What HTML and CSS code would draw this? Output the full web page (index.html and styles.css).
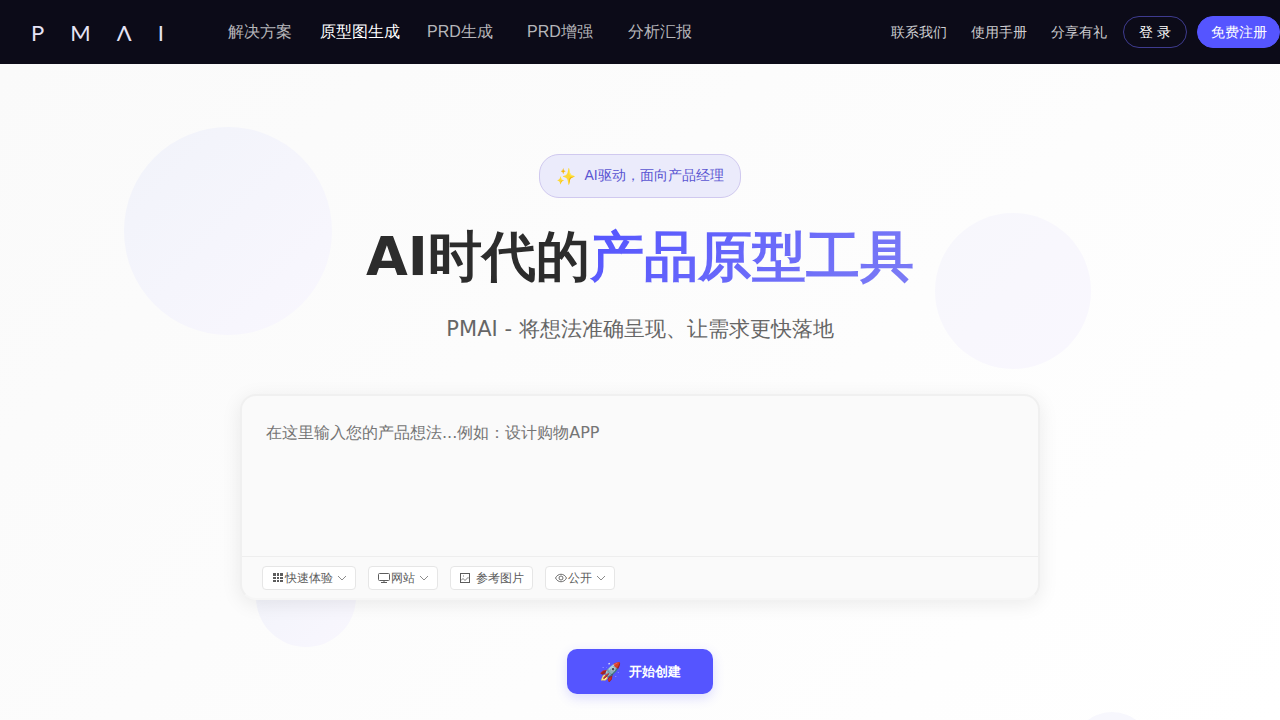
FILE: index.html
```html
<!DOCTYPE html>
<html lang="en">
<head>
    <meta charset="UTF-8">
    <meta name="viewport" content="width=device-width, initial-scale=1.0">
    <title>PMAI</title>
    <link rel="stylesheet" href="styles.css">
</head>
<body>
    <header class="header">
        <a href="#" class="logo"><span>P</span><span>M</span><span>Λ</span><span>I</span></a>
        <nav class="nav">
            <a href="#">解决方案</a>
            <a href="#" class="active">原型图生成</a>
            <a href="#">PRD生成</a>
            <a href="#">PRD增强</a>
            <a href="#">分析汇报</a>
        </nav>
        <div class="header-links">
            <a href="#">联系我们</a>
            <a href="#">使用手册</a>
            <a href="#">分享有礼</a>
        </div>
        <div class="header-buttons">
            <button type="button" class="btn-login">登 录</button>
            <button type="button" class="btn-register">免费注册</button>
        </div>
    </header>

    <main class="hero">
        <div class="circle circle-1"></div>
        <div class="circle circle-2"></div>
        <div class="circle circle-3"></div>
        <div class="circle circle-4"></div>

        <div class="badge"><span class="badge-icon">✨</span><span>AI驱动，面向产品经理</span></div>
        <h1 class="title">AI时代的<span class="highlight">产品原型工具</span></h1>
        <p class="subtitle">PMAI - 将想法准确呈现、让需求更快落地</p>

        <form class="prompt">
            <textarea class="prompt-input" aria-label="产品想法" placeholder="在这里输入您的产品想法...例如：设计购物APP"></textarea>
            <div class="toolbar">
                <button type="button" class="chip">
                    <svg width="12" height="12" viewBox="0 0 12 12" fill="currentColor">
                        <path d="M1 1h3v3H1zM5 1h2v3H5zM8 1h3v3H8zM1 5h3v2H1zM5 5h2v2H5zM8 5h3v2H8zM1 8h3v2H1zM5 8h2v2H5zM8 8h3v2H8z"/>
                    </svg>
                    <span>快速体验</span>
                    <svg class="arrow" width="10" height="10" viewBox="0 0 10 10"><path d="M1 3l4 4 4-4"/></svg>
                </button>
                <button type="button" class="chip">
                    <svg width="12" height="12" viewBox="0 0 12 12" fill="none" stroke="currentColor">
                        <rect x="0.5" y="1.5" width="11" height="7" rx="1"/>
                        <path d="M6 8.500v2M3 10.500h6"/>
                    </svg>
                    <span>网站</span>
                    <svg class="arrow" width="10" height="10" viewBox="0 0 10 10"><path d="M1 3l4 4 4-4"/></svg>
                </button>
                <button type="button" class="chip chip-upload">
                    <svg width="10" height="10" viewBox="0 0 10 10" fill="none" stroke="currentColor">
                        <rect x="0.5" y="0.5" width="9" height="9"/>
                        <path d="M1 7.500l2-2 2 2 3-3 1 1M3 3h1" stroke-width="0.8"/>
                    </svg>
                    <span>参考图片</span>
                </button>
                <button type="button" class="chip">
                    <svg width="12" height="12" viewBox="0 0 12 12" fill="none" stroke="currentColor" stroke-width="0.9">
                        <path d="M0.500 6C3 1 9 1 11.500 6C9 11 3 11 0.500 6z"/>
                        <circle cx="6" cy="6" r="2"/>
                    </svg>
                    <span>公开</span>
                    <svg class="arrow" width="10" height="10" viewBox="0 0 10 10"><path d="M1 3l4 4 4-4"/></svg>
                </button>
            </div>
        </form>

        <button type="button" class="btn-create"><span class="rocket">🚀</span><span>开始创建</span></button>
    </main>
</body>
</html>
```
FILE: styles.css
```css
* {
    box-sizing: border-box;
}

body {
    margin: 0;
    font-family: "Liberation Sans", sans-serif;
    color: #2c2c2c;
    height: 100vh;
    display: flex;
    flex-direction: column;
    overflow: hidden;
}

a {
    color: inherit;
    text-decoration: none;
}

button {
    font-family: inherit;
    cursor: pointer;
}

/* header */
.header {
    display: flex;
    align-items: center;
    flex: none;
    height: 64px;
    padding-left: 31px;
    background: #0c0b18;
    color: #fff;
    white-space: nowrap;
}

.logo {
    display: flex;
    justify-content: space-between;
    width: 133px;
    font-family: Lato, sans-serif;
    font-weight: 400;
    font-size: 22px;
    color: #e6e3f5;
}

.nav {
    display: flex;
    margin-left: 46px;
    font-size: 16px;
    color: #b6b6ba;
}

.nav a {
    width: 100px;
    text-align: center;
}

.nav .active {
    color: #fff;
}

.header-links {
    display: flex;
    gap: 24px;
    margin-left: auto;
    font-size: 14px;
    line-height: 18px;
    color: #ceced1;
}

.header-buttons {
    display: flex;
    gap: 10px;
    margin-left: 16px;
}

.btn-login,
.btn-register {
    height: 32px;
    padding: 1px 14px 0;
    border: 1px solid #3e3b8f;
    border-radius: 16px;
    background: transparent;
    color: #fff;
    font-size: 14px;
}

.btn-login {
    width: 64px;
}

.btn-register {
    width: 83px;
    padding: 1px 0 0;
    border-color: #5555ff;
    background: #5555ff;
}

/* hero */
.hero {
    position: relative;
    flex: 1;
    display: flex;
    flex-direction: column;
    align-items: center;
    padding-top: 90px;
    overflow: hidden;
    background: linear-gradient(135deg, #fafafa, #ffffff);
}

.circle {
    position: absolute;
    border-radius: 50%;
    background: linear-gradient(135deg, #f1f3fa, #f9f7fe);
}

.circle-1 {
    top: 63px;
    left: 124px;
    width: 208px;
    height: 208px;
}

.circle-2 {
    top: 149px;
    right: 189px;
    width: 156px;
    height: 156px;
    background: linear-gradient(135deg, #f7f7fc, #f9f7fe);
}

.circle-3 {
    top: 483px;
    left: 256px;
    width: 100px;
    height: 100px;
}

.circle-4 {
    top: 648px;
    right: 128px;
    width: 80px;
    height: 80px;
    background: #f7f7fd;
}

.badge,
.title,
.subtitle,
.prompt,
.btn-create {
    position: relative;
}

.badge {
    display: flex;
    align-items: center;
    gap: 8px;
    height: 44px;
    padding: 0 16px;
    border: 1px solid #d0c9ef;
    border-radius: 20px;
    background: #ebebfb;
    color: #5a55d2;
    font-size: 14px;
}

.badge-icon {
    font-size: 16px;
}

.title {
    margin: 24px 0 0;
    font-family: "DejaVu Sans", sans-serif;
    font-size: 54px;
    font-weight: 700;
    line-height: 70px;
}

.highlight {
    background: linear-gradient(135deg, #5555ff, #7c7cf5);
    -webkit-background-clip: text;
    background-clip: text;
    color: transparent;
}

.subtitle {
    margin: 20px 0 0;
    font-family: "DejaVu Sans", sans-serif;
    font-size: 21px;
    line-height: 34px;
    color: #666;
}

.prompt {
    width: 800px;
    max-width: 100%;
    margin-top: 48px;
    border: 2px solid #f0f0f0;
    border-bottom-color: #f6f6f6;
    border-radius: 16px;
    background: #fafafa;
    box-shadow: 0 4px 20px rgba(0, 0, 0, 0.08);
    overflow: hidden;
}

.prompt-input {
    display: block;
    width: 100%;
    height: 160px;
    padding: 24px;
    border: none;
    outline: none;
    resize: none;
    background: transparent;
    font-family: "DejaVu Sans", sans-serif;
    font-size: 16px;
    line-height: 26px;
}

.prompt-input::placeholder {
    color: #757575;
}

.toolbar {
    display: flex;
    align-items: center;
    gap: 12px;
    height: 42px;
    padding: 1px 20px 0;
    border-top: 1px solid #eee;
}

.chip {
    display: flex;
    align-items: center;
    gap: 1px;
    height: 24px;
    padding: 0 8px 0 9px;
    border: 1px solid #e6e6e6;
    border-radius: 4px;
    background: #fff;
    color: #5c5c5c;
    font-size: 12px;
}

.arrow {
    margin-left: 3px;
    fill: none;
    stroke: #8c8c8c;
}

.chip-upload {
    gap: 6px;
}

.btn-create {
    display: flex;
    align-items: center;
    gap: 8px;
    height: 45px;
    margin-top: 49px;
    padding: 0 32px;
    border: none;
    border-radius: 10px;
    background: #5555ff;
    box-shadow: 0 4px 12px rgba(85, 85, 255, 0.2);
    color: #fff;
    font-size: 13px;
    font-weight: 700;
}

.rocket {
    font-size: 18px;
}
```
